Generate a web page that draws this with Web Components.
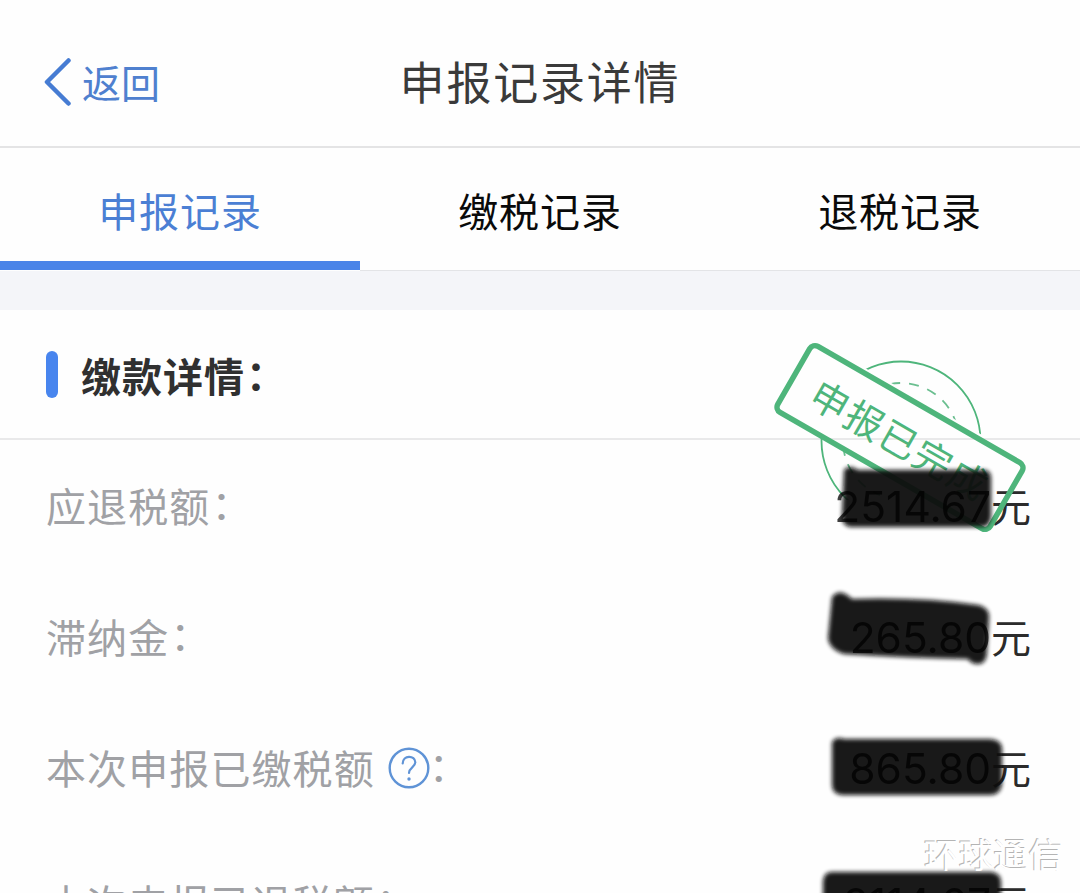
<!DOCTYPE html>
<html lang="zh-CN">
<head>
<meta charset="utf-8">
<title>申报记录详情</title>
<style>
  html, body { margin: 0; height: 100%; overflow: hidden; background: #fff; }
  body { font-family: "Noto Sans CJK SC", sans-serif; }
</style>
</head>
<body>
<tax-app></tax-app>
<script>
const define = (name, html) => customElements.define(name, class extends HTMLElement {
  constructor() {
    super();
    const t = document.createElement('template');
    t.innerHTML = html;
    this.attachShadow({ mode: 'open' }).append(t.content.cloneNode(true));
  }
});

define('nav-bar', `
<style>
  :host { display: grid; grid-template-columns: 1fr auto 1fr; align-items: center; height: 148px; padding-top: 16px; box-sizing: border-box; border-bottom: 2px solid #e4e4e5; flex: none; }
  .back { display: flex; align-items: center; gap: 10px; padding-left: 43px; color: #4f80cf; font-size: 39px; line-height: 56px; }
  svg { display: block; }
  h1 { margin: 0; font-size: 45px; font-weight: 400; letter-spacing: 1.8px; line-height: 64px; color: #3a3a3a; }
</style>
<div class="back"><svg width="29" height="50" viewBox="0 0 29 50"><path d="M25.500 4.500 4 26l21.500 21.500" fill="none" stroke="#467cd3" stroke-width="4.500" stroke-linecap="round" stroke-linejoin="round"/></svg><span>返回</span></div>
<h1><slot></slot></h1>`);

define('tab-item', `
<style>
  :host { display: flex; justify-content: center; align-items: center; flex: 1; height: 123px; box-sizing: border-box; border-bottom: 1px solid #e3e4e7; padding-top: 2px; font-size: 40px; letter-spacing: .9px; color: #0a0a0a; }
  :host([active]) { height: 122px; border-bottom: 9px solid #4a84e8; color: #4b7fd4; padding-top: 11px; }
</style><span><slot></slot></span>`);

define('tab-bar', `<style>:host { display: flex; height: 123px; flex: none; }</style><slot></slot>`);

define('section-head', `
<style>
  :host { display: flex; align-items: center; gap: 23px; height: 130px; box-sizing: border-box; padding-left: 46px; border-bottom: 2px solid #e9e9ea; flex: none; }
  i { width: 12px; height: 47px; border-radius: 6px; background: #4885ee; }
  h2 { margin: 0; padding-top: 2px; font-size: 40px; letter-spacing: 1px; font-weight: 700; color: #303030; line-height: 56px; }
  .c { display: inline-block; transform: translate(1px, -2px); }
</style><i></i><h2><slot></slot><span class="c">：</span></h2>`);

define('help-icon', `
<style>:host { display: block; width: 42px; height: 42px; } svg { display: block; }</style>
<svg width="42" height="42" viewBox="0 0 42 42" fill="none" stroke="#5f93d6" stroke-width="2.400"><circle cx="21" cy="21" r="19.300"/><path d="M14.700 16.500C14.700 7.500 27.300 8 27.300 15.300c0 5-6.300 5.200-6.300 10.700" stroke-width="2.200" stroke-linecap="round"/><circle cx="21" cy="32" r="1.700" fill="#5f93d6" stroke="none"/></svg>`);

define('detail-row', `
<style>
  :host { display: flex; justify-content: space-between; align-items: center; height: 60px; padding: 0 49px 0 46px; font-size: 40px; line-height: 60px; white-space: nowrap; flex: none; }
  .l { display: flex; align-items: center; color: #a0a1a5; letter-spacing: 1.100px; }
  .r { display: flex; align-items: center; color: #2b2b2b; }
</style><div class="l"><slot name="label"></slot></div><div class="r"><slot></slot><span>元</span></div>`);

/* Soft black marker strokes, one over each amount. */
define('marker-ink', `
<style>:host { display: block; position: absolute; left: 0; top: 0; z-index: 3; opacity: .95; pointer-events: none; } svg { display: block; }</style>
<svg width="1080" height="893"><filter id="b" x="-5%" y="-10%" width="110%" height="120%"><feGaussianBlur stdDeviation="2"/></filter><g fill="#0a0a0a" filter="url(#b)">
<path d="M844 470q5-6 14 0h127q6 1 6 8v39q-1 10-10 10H850q-8-2-8-10z"/>
<path d="M832 597q8-10 20 2 70-2 126 6 12 3 11 13l-2 32q0 14-9 14-7 0-10-5-60-1-124-5-15-5-16-16z"/>
<path d="M832 742q4-6 12-3h146q12 1 12 10v34q-1 12-12 12H842q-10-1-10-10z"/>
<path d="M823 881q1-9 9-9h160q9 2 9 10v22H823z"/></g></svg>`);

define('done-stamp', `
<style>:host { display: block; position: absolute; left: 0; top: 0; z-index: 2; } svg { display: block; }</style>
<svg width="1080" height="893" fill="none" stroke="#4eb57b">
  <defs><clipPath id="c"><path d="M816 340 1080 491V300H816ZM776 409 880 469V500H776Z"/></clipPath></defs>
  <g clip-path="url(#c)"><circle cx="901" cy="441" r="79.500" stroke-width="1.800"/><circle cx="901" cy="441" r="58" stroke-width="1.800" stroke-dasharray="10 9" stroke-dashoffset="4" stroke="#6bbf90"/></g>
  <g transform="translate(900 437.500) rotate(29.900)">
    <rect x="-122.500" y="-38" width="245" height="76" rx="6" stroke-width="5.500"/>
    <text x="-98" y="17" fill="#4eb57b" stroke="none" font-size="38" letter-spacing="1.600">申报已完成</text>
  </g>
</svg>`);

define('water-mark', `
<style>:host { display: block; position: absolute; left: 924px; top: 828px; z-index: 5; font-size: 34.500px; letter-spacing: .3px; line-height: 50px; color: #fff; text-shadow: -1px -1px 0 #b4b4b4; white-space: nowrap; }</style><slot></slot>`);

define('tax-app', `
<style>
  :host { position: relative; display: flex; flex-direction: column; width: 1080px; height: 893px; overflow: hidden; background: #fefefe; }
  .gap { height: 39px; background: #f4f5f9; flex: none; }
  .list { display: flex; flex-direction: column; gap: 71px; padding-top: 35px; }
  .n { font-family: Inter, sans-serif; font-size: 42.500px; color: #000; padding-top: 3px; position: relative; z-index: 4; opacity: .75; }
  help-icon { margin: 1px 5px 0 13px; }
  .c { display: inline-block; transform: translate(1px, -3px); }
  detail-row:last-child { padding-top: 4px; }
</style>
<nav-bar>申报记录详情</nav-bar>
<tab-bar><tab-item active>申报记录</tab-item><tab-item>缴税记录</tab-item><tab-item>退税记录</tab-item></tab-bar>
<div class="gap"></div>
<section-head>缴款详情</section-head>
<div class="list">
  <detail-row><span slot="label">应退税额</span><span slot="label" class="c">：</span><span class="n">2514.67</span></detail-row>
  <detail-row><span slot="label">滞纳金</span><span slot="label" class="c">：</span><span class="n">265.80</span></detail-row>
  <detail-row><span slot="label">本次申报已缴税额</span><help-icon slot="label"></help-icon><span slot="label" class="c" style="margin-left:-7px">：</span><span class="n">865.80</span></detail-row>
  <detail-row><span slot="label">本次申报已退税额</span><span slot="label" class="c">：</span><span class="n">2114.67</span></detail-row>
</div>
<done-stamp></done-stamp>
<marker-ink></marker-ink>
<water-mark>环球通信</water-mark>`);
</script>
</body>
</html>
